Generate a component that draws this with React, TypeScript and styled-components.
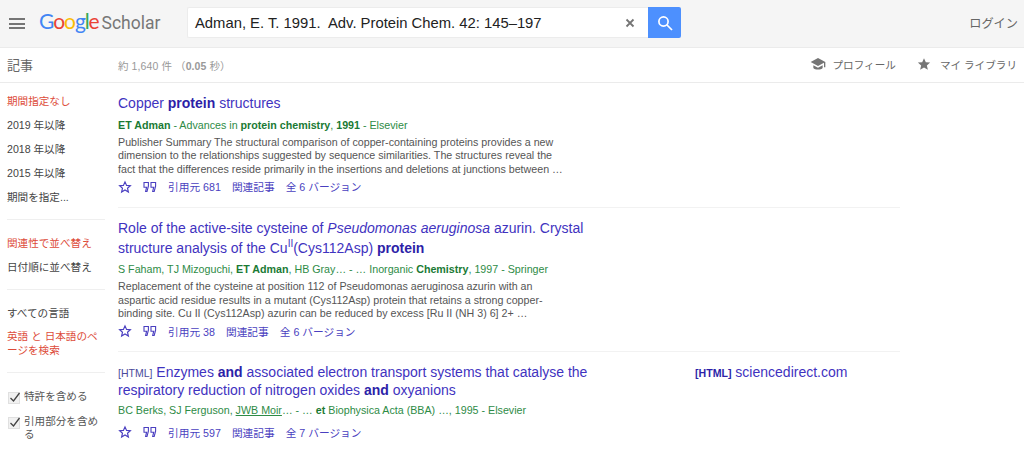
import React from "react";
import styled, { createGlobalStyle } from "styled-components";

const Global = createGlobalStyle`
  html, body { margin: 0; padding: 0; background: #fff; overflow: hidden; }
  body { font-family: "Liberation Sans", "Noto Sans CJK JP", Arial, sans-serif; width: 1024px; height: 450px; }
`;

const Page = styled.div`
  width: 1024px;
  height: 450px;
  overflow: hidden;
  display: flex;
  flex-direction: column;
`;

const Header = styled.header`
  height: 47px;
  flex: none;
  background: #f5f5f5;
  border-bottom: 1px solid #ebebeb;
  display: flex;
  align-items: center;
`;

const Burger = styled.button`
  width: 16px;
  height: 11px;
  margin: 0 0 0 9px;
  padding: 0;
  border: 0;
  background: none;
  display: flex;
  flex-direction: column;
  justify-content: space-between;
  & > span { display: block; height: 2px; background: #757575; }
`;

const Logo = styled.div`
  margin-left: 14px;
  width: 148px;
  display: flex;
  align-items: baseline;
  font-family: "Lato", sans-serif;
  font-size: 21px;
  letter-spacing: -1.1px;
  line-height: 26px;
  margin-bottom: 3px;
`;

const Letter = styled.span<{ $c: string }>`
  color: ${(p) => p.$c};
`;

const ScholarWord = styled.span`
  color: #777;
  margin-left: 3px;
  font-family: "Roboto", sans-serif;
  font-size: 17.5px;
  letter-spacing: 0;
`;

const SearchBox = styled.div`
  display: flex;
  width: 494px;
  height: 31px;
  margin-bottom: 2px;
`;

const SearchField = styled.div`
  flex: 1;
  background: #fff;
  border: 1px solid #ececec;
  border-right: 0;
  box-sizing: border-box;
  display: flex;
  align-items: center;
  padding: 0 13px 0 7px;
  font-size: 14.8px;
  color: #222;
  white-space: pre;
  border-radius: 2px 0 0 2px;
`;

const ClearX = styled.span`
  margin-left: auto;
  display: flex;
  color: #757575;
`;

const SearchButton = styled.button`
  width: 33px;
  flex: none;
  border: 0;
  padding: 0;
  background: #4d90fe;
  border-radius: 0 2px 2px 0;
  display: flex;
  align-items: center;
  justify-content: center;
`;

const Login = styled.div`
  margin-left: auto;
  margin-right: 6px;
  margin-bottom: 2px;
  font-size: 12.2px;
  color: #666;
`;

const SubBar = styled.div`
  height: 34px;
  flex: none;
  border-bottom: 1px solid #ebebeb;
  display: flex;
  align-items: center;
  font-size: 11px;
  color: #777;
`;

const SubTitle = styled.div`
  width: 118px;
  padding-left: 7px;
  padding-bottom: 2px;
  box-sizing: border-box;
  font-size: 13px;
  color: #666;
`;

const Stats = styled.div`
  color: #999;
  font-size: 10.5px;
  letter-spacing: 0.1px;
  white-space: pre;
  & b { font-weight: 700; }
`;

const SubLinks = styled.div`
  margin-left: auto;
  margin-right: 7px;
  padding-bottom: 2px;
  display: flex;
  align-items: center;
  color: #666;
  font-size: 10.6px;
`;

const SubLink = styled.span<{ $gap: number }>`
  display: flex;
  align-items: center;
  gap: ${(p) => p.$gap}px;
  margin-left: 20px;
`;

const Body = styled.div`
  flex: 1;
  display: flex;
  min-height: 0;
`;

const Sidebar = styled.aside`
  width: 118px;
  flex: none;
  box-sizing: border-box;
  padding: 11px 13px 0 7px;
  font-size: 10.6px;
`;

const SideItem = styled.div<{ $active?: boolean }>`
  color: ${(p) => (p.$active ? "#dd4b39" : "#444")};
  line-height: 14px;
  margin-bottom: 10px;
`;

const SideWrap = styled(SideItem)`
  margin-right: 5px;
  line-break: anywhere;
  line-height: 13.5px;
`;

const SideRule = styled.div<{ $mt: number; $mb: number }>`
  height: 1px;
  background: #efefef;
  margin: ${(p) => p.$mt}px 0 ${(p) => p.$mb}px;
`;

const CheckRow = styled.div`
  display: flex;
  gap: 4px;
  color: #555;
  line-height: 13px;
  margin-bottom: 11px;
`;

const CheckBox = styled.span`
  width: 10px;
  height: 10px;
  flex: none;
  margin: 2px 0 0 1px;
  background: #f1f1f1;
  border: 1px solid #e0e0e0;
  position: relative;
  & svg { position: absolute; left: -1px; top: -3px; }
`;

const Main = styled.main`
  width: 782px;
  flex: none;
  padding-top: 12px;
`;

const Result = styled.article<{ $last?: boolean }>`
  display: flex;
  padding-bottom: ${(p) => (p.$last ? 0 : 12)}px;
  margin-bottom: ${(p) => (p.$last ? 0 : 12)}px;
  border-bottom: ${(p) => (p.$last ? "0" : "1px solid #f2f2f2")};
`;

const ResultBody = styled.div`
  width: 477px;
  flex: none;
`;

const Title = styled.h3`
  margin: 0;
  font-weight: 400;
  font-size: 14px;
  line-height: 17px;
  color: #3f33c0;
  & b { font-weight: 700; color: #2d1fa8; }
  & sup { display: inline-block; font-size: 10px; line-height: 14px; vertical-align: 5.5px; }
`;

const FormatTag = styled.span`
  font-size: 10.5px;
  color: #4a4a9a;
`;

const Meta = styled.div<{ $mt?: number }>`
  margin-top: ${(p) => p.$mt ?? 5}px;
  font-size: 10.7px;
  line-height: 16px;
  color: #2e8b46;
  white-space: nowrap;
  & b { color: #1a7a34; font-weight: 700; }
  & u { text-decoration: underline; }
`;

const Snippet = styled.div`
  margin-top: 3px;
  font-size: 10.7px;
  line-height: 13.3px;
  color: #555;
  white-space: pre-line;
`;

const Actions = styled.div<{ $gap?: number }>`
  margin-top: ${(p) => p.$gap ?? 3}px;
  display: flex;
  align-items: center;
  height: 16px;
  font-size: 10.7px;
  color: #4a3fc0;
  white-space: pre;
`;

const ActionIcon = styled.span<{ $w: number }>`
  width: ${(p) => p.$w}px;
  display: flex;
  flex: none;
`;

const ActionLink = styled.span`
  margin-right: 11px;
`;

const SideLink = styled.div`
  margin-left: 100px;
  font-size: 14px;
  line-height: 17px;
  color: #3f33c0;
  white-space: nowrap;
  & b { font-size: 10.6px; font-weight: 700; color: #2d1fa8; }
`;

const Star = ({ color = "#4a3fc0", filled = false, size = 14 }: { color?: string; filled?: boolean; size?: number }) => (
  <svg width={size} height={size} viewBox="0 0 24 24" fill={filled ? color : "none"} stroke={color} strokeWidth={filled ? 0 : 2}>
    <path d="M12 3.2l2.7 6 6.5.6-4.9 4.3 1.5 6.4L12 17.1l-5.8 3.4 1.5-6.4-4.9-4.3 6.5-.6z" />
  </svg>
);

const Quote = () => (
  <svg width="14" height="12" viewBox="0 0 14 12" fill="none" stroke="#4a3fc0" strokeWidth="1.1">
    <path d="M1 1.5h4.4v3.6L4 10.5H2.6l1-4.3H1zM8 1.5h4.6v3.6L11.2 10.5H9.7l1-4.3H8z" />
  </svg>
);

const Cap = () => (
  <svg width="16" height="14" viewBox="0 0 24 20" fill="#757575">
    <path d="M12 1L1 7l11 6 9-4.9V15h2V7z" />
    <path d="M5 12v4c2 3 12 3 14 0v-4l-7 3.8z" />
  </svg>
);

const ActionRow = ({ cites, versions, gap }: { cites: string; versions: string; gap?: number }) => (
  <Actions $gap={gap}>
    <ActionIcon $w={25}><Star /></ActionIcon>
    <ActionIcon $w={25}><Quote /></ActionIcon>
    <ActionLink>引用元 {cites}</ActionLink>
    <ActionLink>関連記事</ActionLink>
    <ActionLink>全 {versions} バージョン</ActionLink>
  </Actions>
);

const Check = () => (
  <svg width="14" height="14" viewBox="0 0 14 14" fill="none" stroke="#444" strokeWidth="1.3"><path d="M2.5 8l3 3 6-8" /></svg>
);

export default function App() {
  return (
    <Page>
      <Global />
      <Header>
        <Burger aria-label="menu"><span /><span /><span /></Burger>
        <Logo>
          <Letter $c="#4285f4">G</Letter>
          <Letter $c="#ea4335">o</Letter>
          <Letter $c="#fbbc05">o</Letter>
          <Letter $c="#4285f4">g</Letter>
          <Letter $c="#34a853">l</Letter>
          <Letter $c="#ea4335">e</Letter>
          <ScholarWord>Scholar</ScholarWord>
        </Logo>
        <SearchBox>
          <SearchField>
            Adman, E. T. 1991.  Adv. Protein Chem. 42: 145–197
            <ClearX>
              <svg width="10" height="10" viewBox="0 0 10 10" stroke="#757575" strokeWidth="1.8"><path d="M1.5 1.5l7 7M8.5 1.5l-7 7" /></svg>
            </ClearX>
          </SearchField>
          <SearchButton aria-label="search">
            <svg width="16" height="16" viewBox="0 0 16 16" fill="none" stroke="#fff" strokeWidth="1.7"><circle cx="6.5" cy="6.5" r="4.6" /><path d="M10 10l5 5" /></svg>
          </SearchButton>
        </SearchBox>
        <Login>ログイン</Login>
      </Header>
      <SubBar>
        <SubTitle>記事</SubTitle>
        <Stats>約 1,640 件 （<b>0.05</b> 秒）</Stats>
        <SubLinks>
          <SubLink $gap={7}><Cap />プロフィール</SubLink>
          <SubLink $gap={8}><Star color="#757575" filled size={16} />マイ ライブラリ</SubLink>
        </SubLinks>
      </SubBar>
      <Body>
        <Sidebar>
          <SideItem $active>期間指定なし</SideItem>
          <SideItem>2019 年以降</SideItem>
          <SideItem>2018 年以降</SideItem>
          <SideItem>2015 年以降</SideItem>
          <SideItem>期間を指定...</SideItem>
          <SideRule $mt={15} $mb={16} />
          <SideItem $active>関連性で並べ替え</SideItem>
          <SideItem>日付順に並べ替え</SideItem>
          <SideRule $mt={15} $mb={16} />
          <SideItem>すべての言語</SideItem>
          <SideWrap $active>英語 と 日本語のページを検索</SideWrap>
          <SideRule $mt={15} $mb={17} />
          <CheckRow>
            <CheckBox><Check /></CheckBox>
            特許を含める
          </CheckRow>
          <CheckRow>
            <CheckBox><Check /></CheckBox>
            <span>引用部分を含める</span>
          </CheckRow>
        </Sidebar>
        <Main>
          <Result>
            <ResultBody>
              <Title>Copper <b>protein</b> structures</Title>
              <Meta><b>ET Adman</b> - Advances in <b>protein chemistry</b>, <b>1991</b> - Elsevier</Meta>
              <Snippet>{"Publisher Summary The structural comparison of copper-containing proteins provides a new\ndimension to the relationships suggested by sequence similarities. The structures reveal the\nfact that the differences reside primarily in the insertions and deletions at junctions between …"}</Snippet>
              <ActionRow cites="681" versions="6" />
            </ResultBody>
          </Result>
          <Result>
            <ResultBody>
              <Title>Role of the active-site cysteine of <i>Pseudomonas aeruginosa</i> azurin. Crystal structure analysis of the Cu<sup>II</sup>(Cys112Asp) <b>protein</b></Title>
              <Meta>S Faham, TJ Mizoguchi, <b>ET Adman</b>, HB Gray… - … Inorganic <b>Chemistry</b>, 1997 - Springer</Meta>
              <Snippet>{"Replacement of the cysteine at position 112 of Pseudomonas aeruginosa azurin with an\naspartic acid residue results in a mutant (Cys112Asp) protein that retains a strong copper-\nbinding site. Cu II (Cys112Asp) azurin can be reduced by excess [Ru II (NH 3) 6] 2+ …"}</Snippet>
              <ActionRow cites="38" versions="6" />
            </ResultBody>
          </Result>
          <Result $last>
            <ResultBody>
              <Title><FormatTag>[HTML]</FormatTag> Enzymes <b>and</b> associated electron transport systems that catalyse the respiratory reduction of nitrogen oxides <b>and</b> oxyanions</Title>
              <Meta $mt={3}>BC Berks, SJ Ferguson, <u>JWB Moir</u>… - … <b>et</b> Biophysica Acta (BBA) …, 1995 - Elsevier</Meta>
              <ActionRow cites="597" versions="7" gap={6} />
            </ResultBody>
            <SideLink><b>[HTML]</b> sciencedirect.com</SideLink>
          </Result>
        </Main>
      </Body>
    </Page>
  );
}
